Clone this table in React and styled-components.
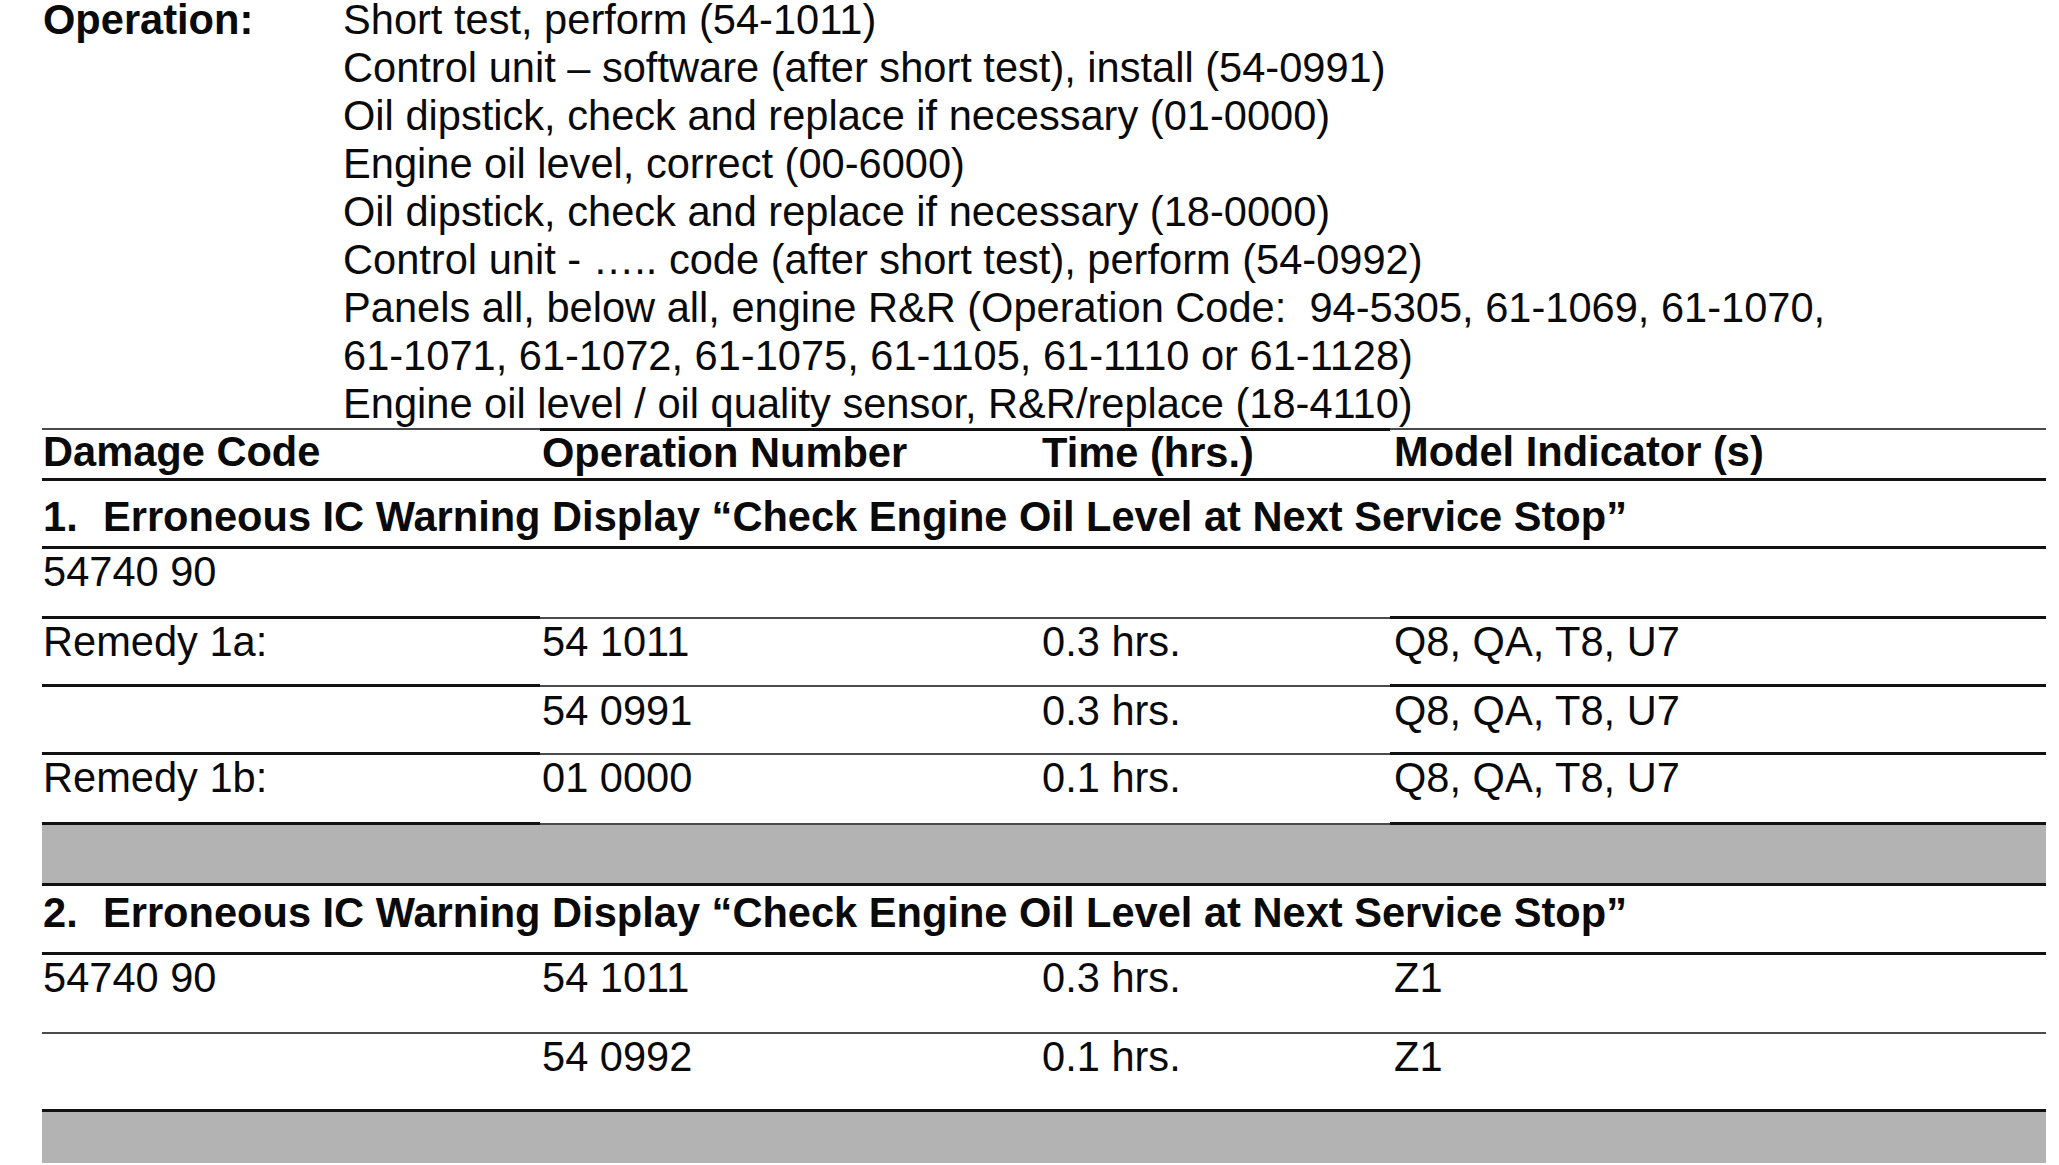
import React from "react";
import styled, { createGlobalStyle, css } from "styled-components";

const GlobalStyle = createGlobalStyle`
  html, body {
    margin: 0;
    padding: 0;
    background: #ffffff;
    overflow: hidden;
  }
  body {
    font-family: "Liberation Sans", Arial, Helvetica, sans-serif;
    color: #0a0a0a;
  }
`;

const Page = styled.div`
  width: 2004px;
  padding-left: 42px;
`;

const OperationBlock = styled.section`
  display: grid;
  grid-template-columns: 301px 1fr;
  margin-top: -4px;
  font-size: 41.6px;
  line-height: 48px;
`;

const OpLabel = styled.div`
  font-weight: 700;
  padding-left: 1px;
`;

const OpList = styled.div`
  display: flex;
  flex-direction: column;
`;

const OpLine = styled.div`
  white-space: pre;
`;

const Table = styled.div`
  display: flex;
  flex-direction: column;
  font-size: 41.6px;
  line-height: 44px;
`;

const rule = (kind) =>
  kind === "strong"
    ? "3px solid #121212"
    : kind === "light"
    ? "2px solid #4a4a4a"
    : "none";

const Row = styled.div`
  display: grid;
  grid-template-columns: 498px 500px 350px 656px;
  height: ${(p) => p.$h}px;
  box-sizing: border-box;
`;

const Cell = styled.div`
  box-sizing: border-box;
  padding-top: ${(p) => p.$pad || 0}px;
  padding-left: ${(p) => p.$indent}px;
  border-bottom: ${(p) => rule(p.$rule)};
  border-top: ${(p) => rule(p.$top)};
  font-weight: ${(p) => (p.$bold ? 700 : 400)};
  white-space: nowrap;
`;

const TitleCell = styled.div`
  grid-column: 1 / -1;
  box-sizing: border-box;
  padding-top: ${(p) => p.$pad}px;
  padding-left: 1px;
  border-bottom: 3px solid #121212;
  font-weight: 700;
  white-space: nowrap;
`;

const Num = styled.span`
  display: inline-block;
  width: 60px;
`;

const Band = styled.div`
  height: ${(p) => p.$h}px;
  box-sizing: border-box;
  background: #b3b3b3;
  ${(p) =>
    p.$closed &&
    css`
      border-bottom: 3px solid #121212;
    `}
`;

const indents = [1, 2, 2, 4];

function DataRow({ h, pad, cells, rules, top, bold }) {
  return (
    <Row $h={h}>
      {cells.map((c, i) => (
        <Cell
          key={i}
          $indent={indents[i]}
          $pad={pad}
          $rule={rules[i]}
          $top={top ? top[i] : undefined}
          $bold={bold}
        >
          {c}
        </Cell>
      ))}
    </Row>
  );
}

const S = "strong";
const L = "light";
const edges = [S, L, L, S];

const operations = [
  "Short test, perform (54-1011)",
  "Control unit \u2013 software (after short test), install (54-0991)",
  "Oil dipstick, check and replace if necessary (01-0000)",
  "Engine oil level, correct (00-6000)",
  "Oil dipstick, check and replace if necessary (18-0000)",
  "Control unit - \u2026.. code (after short test), perform (54-0992)",
  "Panels all, below all, engine R&R (Operation Code:  94-5305, 61-1069, 61-1070,",
  "61-1071, 61-1072, 61-1075, 61-1105, 61-1110 or 61-1128)",
  "Engine oil level / oil quality sensor, R&R/replace (18-4110)",
];

export default function App() {
  return (
    <>
      <GlobalStyle />
      <Page>
        <OperationBlock>
          <OpLabel>Operation:</OpLabel>
          <OpList>
            {operations.map((o, i) => (
              <OpLine key={i}>{o}</OpLine>
            ))}
          </OpList>
        </OperationBlock>

        <Table>
          <DataRow
            h={53}
            pad={0}
            bold
            cells={["Damage Code", "Operation Number", "Time (hrs.)", "Model Indicator (s)"]}
            rules={[S, S, S, S]}
            top={[L, S, S, L]}
          />
          <Row $h={68}>
            <TitleCell $pad={14}>
              <Num>1.</Num>Erroneous IC Warning Display {"\u201C"}Check Engine Oil Level at Next Service Stop{"\u201D"}
            </TitleCell>
          </Row>
          <DataRow h={70} pad={1} cells={["54740 90", "", "", ""]} rules={edges} />
          <DataRow
            h={68}
            pad={1}
            cells={["Remedy 1a:", "54 1011", "0.3 hrs.", "Q8, QA, T8, U7"]}
            rules={edges}
          />
          <DataRow
            h={68}
            pad={2}
            cells={["", "54 0991", "0.3 hrs.", "Q8, QA, T8, U7"]}
            rules={edges}
          />
          <DataRow
            h={70}
            pad={1}
            cells={["Remedy 1b:", "01 0000", "0.1 hrs.", "Q8, QA, T8, U7"]}
            rules={edges}
          />
          <Band $h={61} $closed />
          <Row $h={69}>
            <TitleCell $pad={5}>
              <Num>2.</Num>Erroneous IC Warning Display {"\u201C"}Check Engine Oil Level at Next Service Stop{"\u201D"}
            </TitleCell>
          </Row>
          <DataRow
            h={79}
            pad={1}
            cells={["54740 90", "54 1011", "0.3 hrs.", "Z1"]}
            rules={[L, L, L, L]}
          />
          <DataRow
            h={78}
            pad={1}
            cells={["", "54 0992", "0.1 hrs.", "Z1"]}
            rules={[S, S, S, S]}
          />
          <Band $h={51} />
        </Table>
      </Page>
    </>
  );
}
